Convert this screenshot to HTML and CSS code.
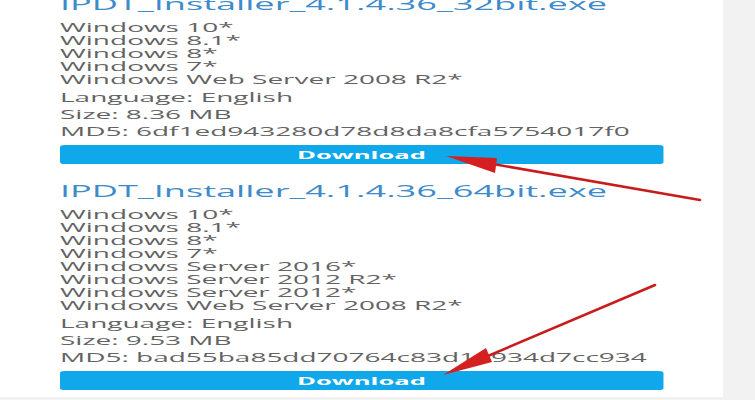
FILE: index.html
```html
<!DOCTYPE html>
<html lang="en">
<head>
    <meta charset="UTF-8">
    <meta name="viewport" content="width=device-width, initial-scale=1.0">
    <title>Intel Processor Diagnostic Tool - Downloads</title>
    <link rel="stylesheet" href="styles.css">
</head>
<body>
    <div class="page">
        <main class="panel">
            <div class="files">
                <section class="file">
                    <h3 class="file-name">IPDT_Installer_4.1.4.36_32bit.exe</h3>
                    <ul class="os-list">
                        <li>Windows 10*</li>
                        <li>Windows 8.1*</li>
                        <li>Windows 8*</li>
                        <li>Windows 7*</li>
                        <li>Windows Web Server 2008 R2*</li>
                    </ul>
                    <p class="meta">Language: English</p>
                    <p class="meta">Size: 8.36 MB</p>
                    <p class="meta">MD5: 6df1ed943280d78d8da8cfa5754017f0</p>
                    <a href="#" class="download">Download</a>
                </section>

                <section class="file">
                    <h3 class="file-name">IPDT_Installer_4.1.4.36_64bit.exe</h3>
                    <ul class="os-list">
                        <li>Windows 10*</li>
                        <li>Windows 8.1*</li>
                        <li>Windows 8*</li>
                        <li>Windows 7*</li>
                        <li>Windows Server 2016*</li>
                        <li>Windows Server 2012 R2*</li>
                        <li>Windows Server 2012*</li>
                        <li>Windows Web Server 2008 R2*</li>
                    </ul>
                    <p class="meta">Language: English</p>
                    <p class="meta">Size: 9.53 MB</p>
                    <p class="meta">MD5: bad55ba85dd70764c83d14934d7cc934</p>
                    <a href="#" class="download">Download</a>
                </section>
            </div>
        </main>
        <aside class="side"></aside>

        <!-- red arrows drawn over the screenshot -->
        <svg class="arrows" width="755" height="400" viewBox="0 0 755 400">
            <line x1="700" y1="200" x2="470" y2="160" stroke="#c81c1c" stroke-width="2.6" stroke-linecap="round"/>
            <polygon points="446,156 497,158 495,173" fill="#d42020"/>
            <line x1="655" y1="285" x2="462" y2="367" stroke="#c81c1c" stroke-width="2.6" stroke-linecap="round"/>
            <polygon points="443,375 486,348 492,362" fill="#d42020"/>
        </svg>
    </div>
</body>
</html>
```

FILE: styles.css
```css
* {
    margin: 0;
    padding: 0;
    box-sizing: border-box;
}

body {
    font-family: 'Open Sans', 'DejaVu Sans', sans-serif;
    color: #636363;
    background: #f2f2f2;
}

.page {
    position: relative;
    display: flex;
    height: 400px;
    overflow: hidden;
}

.panel {
    width: 723px;
    height: 397px;
    padding-left: 60px;
    background: #fff;
    overflow: hidden;
}

.side {
    flex: 1;
    background: #f2f2f2;
}

/* the screenshot is stretched sideways */
.files {
    width: 258.8px;
    margin-top: -6px;
    transform: scaleX(2.33);
    transform-origin: 0 0;
    display: flex;
    flex-direction: column;
    gap: 16.5px;
}

.file-name {
    font-size: 15.5px;
    font-weight: 400;
    line-height: 20px;
    color: #3d8bcb;
    margin-bottom: 7px;
    white-space: nowrap;
}

.os-list {
    list-style: none;
    font-size: 12px;
    line-height: 13px;
    margin-bottom: 3px;
}

.meta {
    font-size: 12px;
    line-height: 17px;
    white-space: nowrap;
}

.download {
    display: block;
    margin-top: 5px;
    height: 19px;
    line-height: 19px;
    background: #0fa8ea;
    border-radius: 2px;
    color: #fff;
    font-size: 11px;
    font-weight: 700;
    text-align: center;
    text-decoration: none;
}

.arrows {
    position: absolute;
    top: 0;
    left: 0;
    pointer-events: none;
}
```
